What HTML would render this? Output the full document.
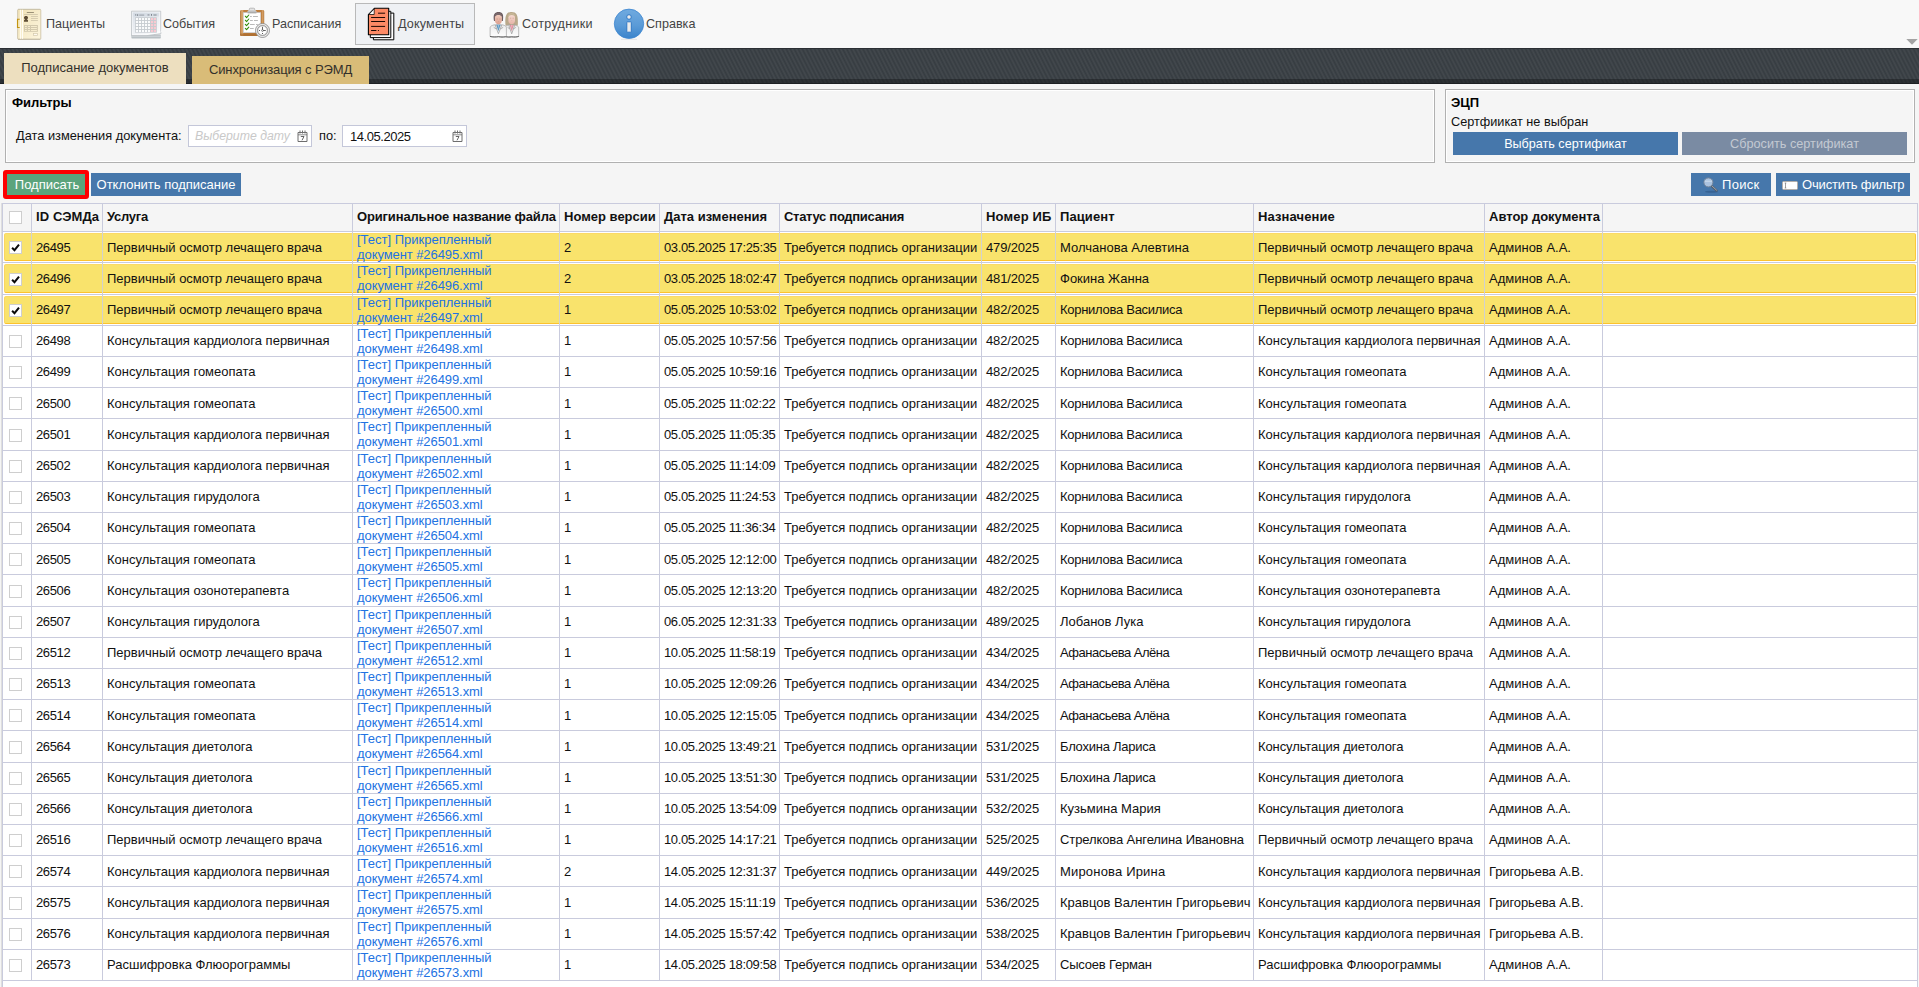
<!DOCTYPE html>
<html lang="ru"><head><meta charset="utf-8"><title>Подписание документов</title>
<style>
*{box-sizing:border-box}
html,body{margin:0;padding:0}
body{width:1919px;height:987px;overflow:hidden;position:relative;background:#f5f5f5;font-family:"Liberation Sans",sans-serif;font-size:13px;color:#111}
.abs{position:absolute}
.tb{position:absolute;left:0;top:0;width:1919px;height:48px;background:#f8f8f8}
.tbi{position:absolute;top:4px;width:40px;height:40px}
.tbt{position:absolute;top:15px;height:18px;line-height:18px;font-size:12.6px;color:#444;white-space:nowrap}
.tbact{position:absolute;left:355px;top:3px;width:120px;height:42px;background:#eff1f4;border:1px solid #b9b9b9}
.band{position:absolute;left:0;top:48px;width:1919px;height:36px;background:#363c41 repeating-linear-gradient(63deg,rgba(255,255,255,0) 0,rgba(255,255,255,.065) 1.8px,rgba(255,255,255,0) 3.6px);border-top:1px solid #2c3034}
.band:after{content:"";position:absolute;left:0;right:0;bottom:0;height:4px;background:rgba(20,22,25,.45);border-bottom:1px solid #1d2023}
.tab{position:absolute;text-align:center;font-size:13px;color:#33302b;white-space:nowrap}
.tab1{left:4px;top:53px;width:182px;height:31px;line-height:29px;background:#eddfbf}
.tab2{left:192px;top:56px;width:177px;height:28px;line-height:27px;background:#d9bc78;letter-spacing:-0.12px}
.panel{position:absolute;top:89px;height:74px;border:1px solid #b1b1b1;box-shadow:inset 0 0 0 1px #fff;background:#f5f5f5}
.ptitle{position:absolute;font-weight:bold;font-size:13px;line-height:16px;white-space:nowrap;color:#000}
.lbl{position:absolute;font-size:12.8px;line-height:16px;white-space:nowrap;color:#111}
.inp{position:absolute;top:125px;height:22px;width:124px;border:1px solid #c4c7d9;background:#fff;font-size:13px;line-height:20px;white-space:nowrap}
.inp span{position:absolute;left:7px;top:1px;letter-spacing:-0.45px}
.inp .ph{font-style:italic;color:#c9c9c9;left:6px;top:0;font-size:12.3px;letter-spacing:0}
.inp svg{position:absolute;right:3px;top:4px}
.btn{position:absolute;height:23px;line-height:24px;background:#4677ab;color:#fff;font-size:13px;text-align:center;white-space:nowrap}
.btn.g{background:#5ba47c}
.btn.d{background:#7a8ba3;color:#c3c9d2}
.redfr{position:absolute;left:3px;top:170px;width:86px;height:29px;border:4px solid #fe0000;border-radius:3px}
/* grid */
.grid{position:absolute;left:2px;top:203px;width:1916px;height:784px;background:#fff;overflow:hidden}
.grid .bl{position:absolute;background:#c9cbdd;z-index:3}
.hrow{position:absolute;left:0;top:0;width:1916px;height:29px;background:#f5f5f5;border-top:1px solid #c9cbdd;border-bottom:1px solid #c9cbdd}
.hc{position:absolute;top:0;height:27px;border-left:1px solid #c9cbdd;padding-left:4px;overflow:hidden;white-space:nowrap}
.ht{position:absolute;left:4px;top:5px;font-weight:bold;font-size:13px;line-height:16px;color:#111}
.row{position:absolute;left:0;width:1916px;border-bottom:1px solid #c9cbdd}
.row .c{position:absolute;top:0;bottom:0;border-left:1px solid #c9cbdd;overflow:hidden;white-space:nowrap}
.row .c span{position:absolute;left:4px;top:var(--t);line-height:16px;font-size:13px}
.row .c.n span{letter-spacing:-0.36px}
.row .c.n2 span{letter-spacing:-0.15px}
.row .c.lk a{position:absolute;left:4px;top:1px;font-size:13px;line-height:14.7px;color:#2272e2}
.row .c.lk a i{font-style:normal;letter-spacing:-0.08px}
.cb{position:absolute;width:13px;height:13px;border:1px solid #cecece;background:#fff;margin:0!important}
.cb svg{position:absolute;left:-1px;top:-1px}
.selbg{position:absolute;left:2px;right:2px;top:1px;bottom:1px;background:#f9e36c;border:1px solid;border-color:#fbd966 #fcc83a #fcc22e #fbd560;border-radius:2px}
.sel .c{border-left-color:#d2d1cf}

</style></head>
<body>
<div class="tb">
<div class="tbact"></div>
<!-- icons inserted -->
<svg class="tbi" style="left:10px" viewBox="0 0 40 40">
<defs><linearGradient id="pg" x1="0" y1="0" x2="1" y2="1"><stop offset="0" stop-color="#f1e2b6"/><stop offset="1" stop-color="#fdf6df"/></linearGradient></defs>
<rect x="7.6" y="5.4" width="23.2" height="29.8" rx="0.8" fill="url(#pg)" stroke="#c4b99b" stroke-width="0.7"/><path d="M8 35.3h22.4" stroke="#aca590" stroke-width="0.6"/><path d="M8 5.3h22.4" stroke="#bdb49c" stroke-width="0.5"/>
<rect x="9.9" y="5.8" width="1" height="29" fill="#fffdf6"/><rect x="11.9" y="5.8" width="1.1" height="29" fill="#fffdf6"/>
<path d="M9.7 15.3H7.5v8.2h2.2" fill="none" stroke="#c39412" stroke-width="1.1"/><path d="M8.5 16.2v6.4" stroke="#f3e3a8" stroke-width="0.9"/>
<rect x="16.8" y="8.1" width="7.1" height="0.8" fill="#857a63"/>
<rect x="14" y="10.1" width="13.9" height="0.8" fill="#cfc5a9"/>
<rect x="21" y="12.1" width="6.9" height="0.8" fill="#cfc5a9"/><rect x="21" y="14.1" width="6.9" height="0.8" fill="#cfc5a9"/><rect x="21" y="16.1" width="6.9" height="0.8" fill="#cfc5a9"/>
<path d="M14 17.8v-1.6l1-.7c-.8-.6-1-1.3-1-2 0-1 .8-1.6 2-1.6s2 .6 2 1.6c0 .7-.2 1.4-1 2l1 .7v1.6z" fill="#5d4d36"/>
<rect x="14" y="21" width="13.9" height="6.8" fill="#d3c9ad"/>
<g fill="#fbf1d2"><rect x="15" y="22" width="1.8" height="0.9"/><rect x="18" y="22" width="2" height="0.9"/><rect x="21" y="22" width="5.9" height="0.9"/>
<rect x="15" y="24" width="1.8" height="0.9"/><rect x="18" y="24" width="2" height="0.9"/><rect x="21" y="24" width="5.9" height="0.9"/>
<rect x="15" y="26" width="1.8" height="0.9"/><rect x="18" y="26" width="2" height="0.9"/><rect x="21" y="26" width="5.9" height="0.9"/></g>
<rect x="23.4" y="29.4" width="4.2" height="2.2" fill="#fffaf0" stroke="#d3c9ad" stroke-width="0.7"/>
</svg>
<svg class="tbi" style="left:126px" viewBox="0 0 40 40">
<defs><linearGradient id="cg" x1="0" y1="0" x2="1" y2="1"><stop offset="0" stop-color="#f4f6f8"/><stop offset="1" stop-color="#fdfdfe"/></linearGradient><linearGradient id="cg2" x1="0" y1="0" x2="0.6" y2="1"><stop offset="0" stop-color="#d9dfe7"/><stop offset="1" stop-color="#f7f8fa"/></linearGradient></defs>
<rect x="5.4" y="30.4" width="29.4" height="4" rx="0.6" fill="#b9c0c4"/><rect x="5.4" y="31.8" width="29.4" height="0.8" fill="#d9dde0"/>
<path d="M5.5 7.2h29.2v20.5l.3 1.9-14 2H5.5z" fill="url(#cg)" stroke="#b5babf" stroke-width="0.7"/><path d="M6.6 8.3h27v18.8l-13 3.2h-14z" fill="url(#cg2)"/><rect x="7.4" y="9.2" width="25.4" height="3.2" fill="#d3dae2" opacity=".8"/>
<g fill="#7f878f"><rect x="9.4" y="10" width="0.8" height="1.8"/><rect x="11" y="10.3" width="1.2" height="1.5"/><rect x="13.2" y="10.5" width="5" height="1.2" opacity=".6"/><rect x="21.5" y="10" width="2" height="1.8" opacity=".55"/><rect x="25" y="10" width="1" height="1.8"/><rect x="27.4" y="10.2" width="3.2" height="1.6" opacity=".6"/></g>
<rect x="9.1" y="13.2" width="21.7" height="15.5" fill="#c6cbd0"/>
<g fill="#fafbfc">
<rect x="9.9" y="14" width="2.1" height="2.1"/><rect x="12.9" y="14" width="2.1" height="2.1"/><rect x="15.9" y="14" width="2.1" height="2.1"/><rect x="18.9" y="14" width="2.1" height="2.1"/><rect x="21.9" y="14" width="2.1" height="2.1"/>
<rect x="9.9" y="17" width="2.1" height="2.1"/><rect x="12.9" y="17" width="2.1" height="2.1"/><rect x="15.9" y="17" width="2.1" height="2.1"/><rect x="18.9" y="17" width="2.1" height="2.1"/><rect x="21.9" y="17" width="2.1" height="2.1"/>
<rect x="9.9" y="20" width="2.1" height="2.1"/><rect x="12.9" y="20" width="2.1" height="2.1"/><rect x="15.9" y="20" width="2.1" height="2.1"/><rect x="18.9" y="20" width="2.1" height="2.1"/><rect x="21.9" y="20" width="2.1" height="2.1"/>
<rect x="9.9" y="23" width="2.1" height="2.1"/><rect x="12.9" y="23" width="2.1" height="2.1"/><rect x="15.9" y="23" width="2.1" height="2.1"/><rect x="18.9" y="23" width="2.1" height="2.1"/><rect x="21.9" y="23" width="2.1" height="2.1"/>
<rect x="9.9" y="26" width="2.1" height="2.1"/><rect x="12.9" y="26" width="2.1" height="2.1"/><rect x="15.9" y="26" width="2.1" height="2.1"/><rect x="18.9" y="26" width="2.1" height="2.1"/><rect x="21.9" y="26" width="2.1" height="2.1"/>
</g>
<g fill="#f9c9d1">
<rect x="24.9" y="14" width="2.1" height="2.1"/><rect x="27.9" y="14" width="2.1" height="2.1"/>
<rect x="24.9" y="17" width="2.1" height="2.1"/><rect x="27.9" y="17" width="2.1" height="2.1"/>
<rect x="24.9" y="20" width="2.1" height="2.1"/><rect x="27.9" y="20" width="2.1" height="2.1"/>
<rect x="24.9" y="23" width="2.1" height="2.1"/><rect x="27.9" y="23" width="2.1" height="2.1"/>
<rect x="24.9" y="26" width="2.1" height="2.1"/><rect x="27.9" y="26" width="2.1" height="2.1"/>
</g>
<path d="M35 22.5c.2 3 .6 5 .8 5.3-3 1.5-9 2.6-15.5 3.2 7-.4 12-1.7 14.7-3.4z" fill="#fff" opacity=".9"/>
</svg>
<svg class="tbi" style="left:234px" viewBox="0 0 40 40">
<defs><linearGradient id="bg1" x1="0" y1="0" x2="1" y2="0"><stop offset="0" stop-color="#a96a2c"/><stop offset=".08" stop-color="#e0b07a"/><stop offset=".16" stop-color="#bd7f40"/><stop offset=".88" stop-color="#bd7f40"/><stop offset=".95" stop-color="#dca86e"/><stop offset="1" stop-color="#a3662a"/></linearGradient>
<linearGradient id="sg" x1="0" y1="0" x2="0" y2="1"><stop offset="0" stop-color="#d6d6d6"/><stop offset=".7" stop-color="#b5b5b5"/><stop offset="1" stop-color="#7d7d7d"/></linearGradient>
<radialGradient id="clk" cx=".5" cy=".5" r=".5"><stop offset="0" stop-color="#fff"/><stop offset=".66" stop-color="#fafafa"/><stop offset=".72" stop-color="#9a9a9a"/><stop offset=".8" stop-color="#e6e6e6"/><stop offset=".93" stop-color="#d2d2d2"/><stop offset="1" stop-color="#8d8d8d"/></radialGradient></defs>
<rect x="6.1" y="6.1" width="24.1" height="25.9" rx="1.3" fill="url(#bg1)"/>
<rect x="6.1" y="29.5" width="24.1" height="2.5" rx="1" fill="#a96a2c" opacity=".7"/>
<rect x="9.3" y="8.7" width="17.4" height="20" fill="#fff" stroke="#c5cedb" stroke-width="0.6"/>
<path d="M15.3 6.2v-1q0-1 1-1h3.4q1 0 1 1v1" fill="#e4e4e4" stroke="#a3a3a3" stroke-width="0.7"/>
<path d="M14.6 6.1h6.8l1 1.1v2.1h-8.8v-2.1z" fill="url(#sg)"/>
<g fill="none" stroke="#2f8c0a" stroke-width="1.05" stroke-linecap="round" stroke-linejoin="round"><path d="M11.3 12.2l1.3 1.4 2.2-2.6"/><path d="M11.3 16.2l1.3 1.4 2.2-2.6"/><path d="M11.3 20.3l1.3 1.4 2.2-2.6"/><path d="M11.3 24.3l1.3 1.4 2.2-2.6"/></g>
<g fill="#a9a9a9"><rect x="16" y="12.1" width="1.8" height="0.8"/><rect x="19" y="12.1" width="4.9" height="0.8"/><rect x="16" y="16.1" width="2.8" height="0.8"/><rect x="20" y="16.1" width="3.9" height="0.8"/><rect x="16" y="20.2" width="4.7" height="0.8"/><rect x="22" y="20.2" width="1.8" height="0.8"/><rect x="16" y="24.2" width="3.7" height="0.8"/></g>
<circle cx="28.5" cy="26.5" r="7" fill="#cecece" stroke="#8a8a8a" stroke-width="0.8"/><circle cx="28.5" cy="26.5" r="6" fill="none" stroke="#efefef" stroke-width="0.9"/><circle cx="28.5" cy="26.5" r="4.9" fill="#fdfdfd" stroke="#888" stroke-width="0.9"/>
<path d="M28.5 22.8v3.7h3.3" fill="none" stroke="#222" stroke-width="0.7"/><circle cx="28.5" cy="26.5" r="0.9" fill="#fff" stroke="#222" stroke-width="0.5"/><circle cx="25.4" cy="26.5" r="0.5" fill="#222"/><circle cx="28.5" cy="29.5" r="0.5" fill="#222"/>
</svg>
<svg class="tbi" style="left:360px" viewBox="0 0 40 40">
<path d="M30.8 9.1h3v26.7H13.4v-2.2" fill="#fff" stroke="#000" stroke-width="1"/>
<path d="M28.9 7.3h1.9v26.3H10.3V31" fill="#fff" stroke="#000" stroke-width="1"/>
<path d="M14.4 4.3h14.3v26.5H8.4V10.7z" fill="#fd8a65" stroke="#000" stroke-width="1.1" stroke-linejoin="round"/>
<path d="M8.8 10.5h5.4V4.8z" fill="#fff" stroke="#111" stroke-width="0.8" stroke-linejoin="round"/>
<g stroke="#1c0803" stroke-width="1" stroke-linecap="round"><path d="M18.4 9.2h6.3"/><path d="M11.5 13.5h13.2"/><path d="M11.5 17.5h13.2"/><path d="M11.5 22.4h13.2"/><path d="M11.5 26.5h4.5"/><path d="M18.3 26.5h.2"/></g>
<path d="M30.5 10.2v.4M30.5 11.5v.2" stroke="#fff" stroke-width="0.5"/>
</svg>
<svg class="tbi" style="left:484px" viewBox="0 0 40 40">
<defs><linearGradient id="coat" x1="0" y1="0" x2="0" y2="1"><stop offset="0" stop-color="#ececec"/><stop offset="1" stop-color="#fdfdfd"/></linearGradient>
<linearGradient id="fm" x1="0" y1="0" x2="0" y2="1"><stop offset="0" stop-color="#f1cbbd"/><stop offset="1" stop-color="#dd9f8e"/></linearGradient>
<linearGradient id="fw" x1="0" y1="0" x2="0" y2="1"><stop offset="0" stop-color="#f5dad0"/><stop offset="1" stop-color="#e6b3a6"/></linearGradient></defs>
<path d="M21.5 21.6c-.3-4.2-.5-8.200.9-10.9 1.2-2.2 3.2-2.8 5.3-2.8s4.100.7 5.1 2.9c1.3 2.8 1.1 6.8 1 10.8z" fill="#b9a88a"/>
<path d="M24.4 13.3c0-1.7 1.4-2.4 3.3-2.4s3.300.7 3.3 2.4v3.3c0 2.3-1.5 3.8-3.3 3.8s-3.3-1.5-3.3-3.8z" fill="url(#fw)"/>
<path d="M23.8 13.5c.8-2 2.2-2.9 3.9-2.9 1.8 0 3.200.9 4 2.9-.3-3-1.7-4.6-4-4.6-2.2 0-3.7 1.6-3.9 4.6z" fill="#c9b999"/>
<path d="M21 32.6v-9c0-1.3 1.5-2 3.6-2.6h6.3c2 .6 3.8 1.3 3.8 2.6v9z" fill="url(#coat)" stroke="#a2a2a2" stroke-width="0.7"/>
<path d="M25.7 21l2 6.4 2.1-6.4z" fill="#dc8e9c"/><path d="M27 21l.7 4 .8-4z" fill="#f0b4bf"/>
<path d="M24.8 21.2l2.9 8.6 3-8.6M23.6 23.4l2.3 1.5M31.8 23.4l-2.2 1.5" stroke="#959595" stroke-width="0.7" fill="none"/>
<path d="M10 17c-.5-3.1-.6-5.700.4-7.1 1-1.5 2.5-2 4.1-2 1.8 0 3.300.5 4.1 2 .8 1.600.6 4 .3 7.1z" fill="#6c5c60"/>
<path d="M10.9 12.8c0-1.3 1.5-2 3.5-2s3.500.7 3.5 2v3.8c0 2.3-1.6 3.9-3.5 3.9s-3.5-1.6-3.5-3.9z" fill="url(#fm)"/>
<path d="M10.6 13.2c1.3-1.9 2.5-2.1 3.9-2.1 1.5 0 2.700.4 3.8 2.1 0-3-1.4-4.5-3.8-4.5s-3.9 1.5-3.9 4.5z" fill="#7a696c"/>
<path d="M12.6 15h1.3M15.3 15h1.3M14.3 17.2l.3.5M26 14.2h1.2M28.6 14.2h1.2M27.7 16.5l.2.4" stroke="#9a6a5c" stroke-width="0.5" opacity=".7" fill="none"/><path d="M6.1 32.6v-9c0-1.3 1.7-2.1 4.2-2.8h8.3c2.400.7 3.8 1.5 3.8 2.8v9z" fill="url(#coat)" stroke="#a2a2a2" stroke-width="0.7"/>
<path d="M12.2 20.8l2.2 6.4 2.3-6.4z" fill="#5f97bf"/><path d="M13.7 20.8l.7 4 .8-4z" fill="#9cc4de"/>
<path d="M11.2 21l3.2 8.7 3.4-8.7M9.7 23.3l2.5 1.6M19.2 23.3l-2.6 1.6" stroke="#959595" stroke-width="0.7" fill="none"/>
<path d="M6 32.4c2.500.8 6 .8 8.500.3 2.300.5 4.700.6 7 .1 2.200.5 4.300.5 6.300.1 2.300.4 4.700.3 7-.5" stroke="#5f5f5f" stroke-width="1" fill="none"/>
</svg>
<svg class="tbi" style="left:608px" viewBox="0 0 40 40">
<defs><linearGradient id="ig" x1="0" y1="0" x2="0" y2="1"><stop offset="0" stop-color="#70aadf"/><stop offset=".55" stop-color="#5b9bd7"/><stop offset="1" stop-color="#3a83cb"/></linearGradient></defs>
<path d="M13 35.4h16" stroke="#d8d8d8" stroke-width="0.6"/>
<circle cx="21" cy="19.8" r="14.7" fill="url(#ig)" stroke="#3d86d1" stroke-width="0.8"/>
<circle cx="21" cy="13" r="2.3" fill="#ededed" stroke="#2f78c6" stroke-width="1"/>
<rect x="18.8" y="17.8" width="4.5" height="10.4" rx="0.4" fill="#ececec" stroke="#2f78c6" stroke-width="1"/>
</svg>

<span class="tbt" style="left:46px">Пациенты</span>
<span class="tbt" style="left:163px">События</span>
<span class="tbt" style="left:272px">Расписания</span>
<span class="tbt" style="left:398px;letter-spacing:.15px">Документы</span>
<span class="tbt" style="left:522px;letter-spacing:.25px">Сотрудники</span>
<span class="tbt" style="left:646px">Справка</span>
<svg class="abs" style="left:1906px;top:39px" width="12" height="6" viewBox="0 0 12 6"><path d="M0.3 0h11.4L6 5.8z" fill="#a3a3a3"/></svg>
</div>
<div class="band"></div>
<div class="tab tab1">Подписание документов</div>
<div class="tab tab2">Синхронизация с РЭМД</div>

<div class="panel" style="left:5px;width:1430px"></div>
<div class="ptitle" style="left:12px;top:95px">Фильтры</div>
<div class="lbl" style="left:16px;top:128px">Дата изменения документа:</div>
<div class="inp" style="left:188px"><span class="ph">Выберите дату</span><svg width="11" height="12" viewBox="0 0 11 12"><path d="M1 2.500h9v9H1z" fill="#fff" stroke="#6e6e6e" stroke-width="1"/><path d="M1 4.800h9" stroke="#6e6e6e" stroke-width="0.800"/><path d="M3 0.500v3M5.500 0.500v3M8 0.500v3" stroke="#6e6e6e" stroke-width="1"/><path d="M3.800 6.500h3.200l-2 3.800" fill="none" stroke="#555" stroke-width="0.900"/></svg></div>
<div class="lbl" style="left:319px;top:128px">по:</div>
<div class="inp" style="left:342px;width:125px"><span>14.05.2025</span><svg width="11" height="12" viewBox="0 0 11 12"><path d="M1 2.500h9v9H1z" fill="#fff" stroke="#6e6e6e" stroke-width="1"/><path d="M1 4.800h9" stroke="#6e6e6e" stroke-width="0.800"/><path d="M3 0.500v3M5.500 0.500v3M8 0.500v3" stroke="#6e6e6e" stroke-width="1"/><path d="M3.800 6.500h3.200l-2 3.800" fill="none" stroke="#555" stroke-width="0.900"/></svg></div>

<div class="panel" style="left:1445px;width:470px"></div>
<div class="ptitle" style="left:1451px;top:95px">ЭЦП</div>
<div class="lbl" style="left:1451px;top:114px;font-size:12.7px">Сертфиикат не выбран</div>
<div class="btn" style="left:1453px;top:132px;width:225px;font-size:12.6px">Выбрать сертификат</div>
<div class="btn d" style="left:1682px;top:132px;width:225px;font-size:12.7px">Сбросить сертификат</div>

<div class="btn g" style="left:6px;top:173px;width:80px;padding-left:2px">Подписать</div>
<div class="redfr"></div>
<div class="btn" style="left:91px;top:173px;width:150px">Отклонить подписание</div>
<div class="btn" style="left:1691px;top:173px;width:80px;text-align:left"><span class="abs" style="left:31px;letter-spacing:.3px">Поиск</span><svg class="abs" style="left:11px;top:3px" width="18" height="18" viewBox="0 0 18 18"><ellipse cx="9.5" cy="15.7" rx="6.5" ry="1" fill="#2c5482" opacity=".55"/><path d="M10 10.4l4.6 4.2" stroke="#56606c" stroke-width="2.2" stroke-linecap="round"/><path d="M10.2 10.2l4.3 3.9" stroke="#b9c0ca" stroke-width="0.7" stroke-linecap="round"/><circle cx="6.4" cy="6.4" r="4.5" fill="#aac2df" stroke="#76869b" stroke-width="1"/><path d="M2.6 5.2h7.6" stroke="#d3e1f0" stroke-width="0.9"/></svg></div>
<div class="btn" style="left:1776px;top:173px;width:134px;text-align:left"><span class="abs" style="left:26px;letter-spacing:-0.15px">Очистить фильтр</span><svg class="abs" style="left:6px;top:8px" width="17" height="10" viewBox="0 0 17 10"><rect x="0.500" y="0.500" width="15" height="8" rx="1" fill="#fff" stroke="#b8aca0" stroke-width="0.800"/><path d="M3.500 2v5M2.700 2h1.600M2.700 7h1.600" stroke="#777" stroke-width="0.700"/></svg></div>
<div class="abs" style="left:1px;top:203px;width:1px;height:784px;background:#dedede"></div>
<div class="grid">
<div class="bl" style="left:0;top:0;width:1px;height:784px"></div><div class="bl" style="left:1915px;top:0;width:1px;height:784px"></div>
<div class="hrow"><div class="hc" style="left:0px;width:29px"><span class="cb" style="left:6px;top:7px"></span></div><div class="hc" style="left:29px;width:71px"><span class="ht" style="letter-spacing:0.1px">ID СЭМДа</span></div><div class="hc" style="left:100px;width:250px"><span class="ht" style="letter-spacing:-0.25px">Услуга</span></div><div class="hc" style="left:350px;width:207px"><span class="ht" style="letter-spacing:-0.15px">Оригинальное название файла</span></div><div class="hc" style="left:557px;width:100px"><span class="ht">Номер версии</span></div><div class="hc" style="left:657px;width:120px"><span class="ht">Дата изменения</span></div><div class="hc" style="left:777px;width:202px"><span class="ht" style="letter-spacing:-0.3px">Статус подписания</span></div><div class="hc" style="left:979px;width:74px"><span class="ht" style="letter-spacing:0.17px">Номер ИБ</span></div><div class="hc" style="left:1053px;width:198px"><span class="ht" style="letter-spacing:0.1px">Пациент</span></div><div class="hc" style="left:1251px;width:231px"><span class="ht" style="letter-spacing:0.1px">Назначение</span></div><div class="hc" style="left:1482px;width:118px"><span class="ht">Автор документа</span></div><div class="hc" style="left:1600px;width:315px"><span class="ht"></span></div></div>
<div class="row sel" style="top:29px;height:31px;--t:8px"><div class="selbg"></div><div class="c" style="left:0px;width:29px"><span class="cb" style="left:6px;top:9px"><svg viewBox="0 0 13 13" width="13" height="13"><path d="M3.1 6.7L5.5 9.2L10 3.7" fill="none" stroke="#0a0a0a" stroke-width="2"/></svg></span></div><div class="c n" style="left:29px;width:71px"><span>26495</span></div><div class="c" style="left:100px;width:250px"><span>Первичный осмотр лечащего врача</span></div><div class="c lk" style="left:350px;width:207px"><a>[Тест] Прикрепленный<br><i>документ #26495.xml</i></a></div><div class="c n" style="left:557px;width:100px"><span>2</span></div><div class="c n" style="left:657px;width:120px"><span>03.05.2025 17:25:35</span></div><div class="c" style="left:777px;width:202px"><span>Требуется подпись организации</span></div><div class="c n2" style="left:979px;width:74px"><span>479/2025</span></div><div class="c" style="left:1053px;width:198px"><span>Молчанова Алевтина</span></div><div class="c" style="left:1251px;width:231px"><span>Первичный осмотр лечащего врача</span></div><div class="c" style="left:1482px;width:118px"><span>Админов А.А.</span></div><div class="c" style="left:1600px;width:315px"><span></span></div></div>
<div class="row sel" style="top:60px;height:32px;--t:8px"><div class="selbg"></div><div class="c" style="left:0px;width:29px"><span class="cb" style="left:6px;top:10px"><svg viewBox="0 0 13 13" width="13" height="13"><path d="M3.1 6.7L5.5 9.2L10 3.7" fill="none" stroke="#0a0a0a" stroke-width="2"/></svg></span></div><div class="c n" style="left:29px;width:71px"><span>26496</span></div><div class="c" style="left:100px;width:250px"><span>Первичный осмотр лечащего врача</span></div><div class="c lk" style="left:350px;width:207px"><a>[Тест] Прикрепленный<br><i>документ #26496.xml</i></a></div><div class="c n" style="left:557px;width:100px"><span>2</span></div><div class="c n" style="left:657px;width:120px"><span>03.05.2025 18:02:47</span></div><div class="c" style="left:777px;width:202px"><span>Требуется подпись организации</span></div><div class="c n2" style="left:979px;width:74px"><span>481/2025</span></div><div class="c" style="left:1053px;width:198px"><span>Фокина Жанна</span></div><div class="c" style="left:1251px;width:231px"><span>Первичный осмотр лечащего врача</span></div><div class="c" style="left:1482px;width:118px"><span>Админов А.А.</span></div><div class="c" style="left:1600px;width:315px"><span></span></div></div>
<div class="row sel" style="top:92px;height:31px;--t:7px"><div class="selbg"></div><div class="c" style="left:0px;width:29px"><span class="cb" style="left:6px;top:9px"><svg viewBox="0 0 13 13" width="13" height="13"><path d="M3.1 6.7L5.5 9.2L10 3.7" fill="none" stroke="#0a0a0a" stroke-width="2"/></svg></span></div><div class="c n" style="left:29px;width:71px"><span>26497</span></div><div class="c" style="left:100px;width:250px"><span>Первичный осмотр лечащего врача</span></div><div class="c lk" style="left:350px;width:207px"><a>[Тест] Прикрепленный<br><i>документ #26497.xml</i></a></div><div class="c n" style="left:557px;width:100px"><span>1</span></div><div class="c n" style="left:657px;width:120px"><span>05.05.2025 10:53:02</span></div><div class="c" style="left:777px;width:202px"><span>Требуется подпись организации</span></div><div class="c n2" style="left:979px;width:74px"><span>482/2025</span></div><div class="c" style="left:1053px;width:198px"><span style="letter-spacing:-0.28px">Корнилова Василиса</span></div><div class="c" style="left:1251px;width:231px"><span>Первичный осмотр лечащего врача</span></div><div class="c" style="left:1482px;width:118px"><span>Админов А.А.</span></div><div class="c" style="left:1600px;width:315px"><span></span></div></div>
<div class="row" style="top:123px;height:31px;--t:7px"><div class="c" style="left:0px;width:29px"><span class="cb" style="left:6px;top:9px"></span></div><div class="c n" style="left:29px;width:71px"><span>26498</span></div><div class="c" style="left:100px;width:250px"><span>Консультация кардиолога первичная</span></div><div class="c lk" style="left:350px;width:207px"><a>[Тест] Прикрепленный<br><i>документ #26498.xml</i></a></div><div class="c n" style="left:557px;width:100px"><span>1</span></div><div class="c n" style="left:657px;width:120px"><span>05.05.2025 10:57:56</span></div><div class="c" style="left:777px;width:202px"><span>Требуется подпись организации</span></div><div class="c n2" style="left:979px;width:74px"><span>482/2025</span></div><div class="c" style="left:1053px;width:198px"><span style="letter-spacing:-0.28px">Корнилова Василиса</span></div><div class="c" style="left:1251px;width:231px"><span>Консультация кардиолога первичная</span></div><div class="c" style="left:1482px;width:118px"><span>Админов А.А.</span></div><div class="c" style="left:1600px;width:315px"><span></span></div></div>
<div class="row" style="top:154px;height:31px;--t:7px"><div class="c" style="left:0px;width:29px"><span class="cb" style="left:6px;top:9px"></span></div><div class="c n" style="left:29px;width:71px"><span>26499</span></div><div class="c" style="left:100px;width:250px"><span>Консультация гомеопата</span></div><div class="c lk" style="left:350px;width:207px"><a>[Тест] Прикрепленный<br><i>документ #26499.xml</i></a></div><div class="c n" style="left:557px;width:100px"><span>1</span></div><div class="c n" style="left:657px;width:120px"><span>05.05.2025 10:59:16</span></div><div class="c" style="left:777px;width:202px"><span>Требуется подпись организации</span></div><div class="c n2" style="left:979px;width:74px"><span>482/2025</span></div><div class="c" style="left:1053px;width:198px"><span style="letter-spacing:-0.28px">Корнилова Василиса</span></div><div class="c" style="left:1251px;width:231px"><span>Консультация гомеопата</span></div><div class="c" style="left:1482px;width:118px"><span>Админов А.А.</span></div><div class="c" style="left:1600px;width:315px"><span></span></div></div>
<div class="row" style="top:185px;height:31px;--t:8px"><div class="c" style="left:0px;width:29px"><span class="cb" style="left:6px;top:9px"></span></div><div class="c n" style="left:29px;width:71px"><span>26500</span></div><div class="c" style="left:100px;width:250px"><span>Консультация гомеопата</span></div><div class="c lk" style="left:350px;width:207px"><a>[Тест] Прикрепленный<br><i>документ #26500.xml</i></a></div><div class="c n" style="left:557px;width:100px"><span>1</span></div><div class="c n" style="left:657px;width:120px"><span>05.05.2025 11:02:22</span></div><div class="c" style="left:777px;width:202px"><span>Требуется подпись организации</span></div><div class="c n2" style="left:979px;width:74px"><span>482/2025</span></div><div class="c" style="left:1053px;width:198px"><span style="letter-spacing:-0.28px">Корнилова Василиса</span></div><div class="c" style="left:1251px;width:231px"><span>Консультация гомеопата</span></div><div class="c" style="left:1482px;width:118px"><span>Админов А.А.</span></div><div class="c" style="left:1600px;width:315px"><span></span></div></div>
<div class="row" style="top:216px;height:32px;--t:8px"><div class="c" style="left:0px;width:29px"><span class="cb" style="left:6px;top:10px"></span></div><div class="c n" style="left:29px;width:71px"><span>26501</span></div><div class="c" style="left:100px;width:250px"><span>Консультация кардиолога первичная</span></div><div class="c lk" style="left:350px;width:207px"><a>[Тест] Прикрепленный<br><i>документ #26501.xml</i></a></div><div class="c n" style="left:557px;width:100px"><span>1</span></div><div class="c n" style="left:657px;width:120px"><span>05.05.2025 11:05:35</span></div><div class="c" style="left:777px;width:202px"><span>Требуется подпись организации</span></div><div class="c n2" style="left:979px;width:74px"><span>482/2025</span></div><div class="c" style="left:1053px;width:198px"><span style="letter-spacing:-0.28px">Корнилова Василиса</span></div><div class="c" style="left:1251px;width:231px"><span>Консультация кардиолога первичная</span></div><div class="c" style="left:1482px;width:118px"><span>Админов А.А.</span></div><div class="c" style="left:1600px;width:315px"><span></span></div></div>
<div class="row" style="top:248px;height:31px;--t:7px"><div class="c" style="left:0px;width:29px"><span class="cb" style="left:6px;top:9px"></span></div><div class="c n" style="left:29px;width:71px"><span>26502</span></div><div class="c" style="left:100px;width:250px"><span>Консультация кардиолога первичная</span></div><div class="c lk" style="left:350px;width:207px"><a>[Тест] Прикрепленный<br><i>документ #26502.xml</i></a></div><div class="c n" style="left:557px;width:100px"><span>1</span></div><div class="c n" style="left:657px;width:120px"><span>05.05.2025 11:14:09</span></div><div class="c" style="left:777px;width:202px"><span>Требуется подпись организации</span></div><div class="c n2" style="left:979px;width:74px"><span>482/2025</span></div><div class="c" style="left:1053px;width:198px"><span style="letter-spacing:-0.28px">Корнилова Василиса</span></div><div class="c" style="left:1251px;width:231px"><span>Консультация кардиолога первичная</span></div><div class="c" style="left:1482px;width:118px"><span>Админов А.А.</span></div><div class="c" style="left:1600px;width:315px"><span></span></div></div>
<div class="row" style="top:279px;height:31px;--t:7px"><div class="c" style="left:0px;width:29px"><span class="cb" style="left:6px;top:9px"></span></div><div class="c n" style="left:29px;width:71px"><span>26503</span></div><div class="c" style="left:100px;width:250px"><span>Консультация гирудолога</span></div><div class="c lk" style="left:350px;width:207px"><a>[Тест] Прикрепленный<br><i>документ #26503.xml</i></a></div><div class="c n" style="left:557px;width:100px"><span>1</span></div><div class="c n" style="left:657px;width:120px"><span>05.05.2025 11:24:53</span></div><div class="c" style="left:777px;width:202px"><span>Требуется подпись организации</span></div><div class="c n2" style="left:979px;width:74px"><span>482/2025</span></div><div class="c" style="left:1053px;width:198px"><span style="letter-spacing:-0.28px">Корнилова Василиса</span></div><div class="c" style="left:1251px;width:231px"><span>Консультация гирудолога</span></div><div class="c" style="left:1482px;width:118px"><span>Админов А.А.</span></div><div class="c" style="left:1600px;width:315px"><span></span></div></div>
<div class="row" style="top:310px;height:31px;--t:7px"><div class="c" style="left:0px;width:29px"><span class="cb" style="left:6px;top:9px"></span></div><div class="c n" style="left:29px;width:71px"><span>26504</span></div><div class="c" style="left:100px;width:250px"><span>Консультация гомеопата</span></div><div class="c lk" style="left:350px;width:207px"><a>[Тест] Прикрепленный<br><i>документ #26504.xml</i></a></div><div class="c n" style="left:557px;width:100px"><span>1</span></div><div class="c n" style="left:657px;width:120px"><span>05.05.2025 11:36:34</span></div><div class="c" style="left:777px;width:202px"><span>Требуется подпись организации</span></div><div class="c n2" style="left:979px;width:74px"><span>482/2025</span></div><div class="c" style="left:1053px;width:198px"><span style="letter-spacing:-0.28px">Корнилова Василиса</span></div><div class="c" style="left:1251px;width:231px"><span>Консультация гомеопата</span></div><div class="c" style="left:1482px;width:118px"><span>Админов А.А.</span></div><div class="c" style="left:1600px;width:315px"><span></span></div></div>
<div class="row" style="top:341px;height:31px;--t:8px"><div class="c" style="left:0px;width:29px"><span class="cb" style="left:6px;top:9px"></span></div><div class="c n" style="left:29px;width:71px"><span>26505</span></div><div class="c" style="left:100px;width:250px"><span>Консультация гомеопата</span></div><div class="c lk" style="left:350px;width:207px"><a>[Тест] Прикрепленный<br><i>документ #26505.xml</i></a></div><div class="c n" style="left:557px;width:100px"><span>1</span></div><div class="c n" style="left:657px;width:120px"><span>05.05.2025 12:12:00</span></div><div class="c" style="left:777px;width:202px"><span>Требуется подпись организации</span></div><div class="c n2" style="left:979px;width:74px"><span>482/2025</span></div><div class="c" style="left:1053px;width:198px"><span style="letter-spacing:-0.28px">Корнилова Василиса</span></div><div class="c" style="left:1251px;width:231px"><span>Консультация гомеопата</span></div><div class="c" style="left:1482px;width:118px"><span>Админов А.А.</span></div><div class="c" style="left:1600px;width:315px"><span></span></div></div>
<div class="row" style="top:372px;height:32px;--t:8px"><div class="c" style="left:0px;width:29px"><span class="cb" style="left:6px;top:10px"></span></div><div class="c n" style="left:29px;width:71px"><span>26506</span></div><div class="c" style="left:100px;width:250px"><span>Консультация озонотерапевта</span></div><div class="c lk" style="left:350px;width:207px"><a>[Тест] Прикрепленный<br><i>документ #26506.xml</i></a></div><div class="c n" style="left:557px;width:100px"><span>1</span></div><div class="c n" style="left:657px;width:120px"><span>05.05.2025 12:13:20</span></div><div class="c" style="left:777px;width:202px"><span>Требуется подпись организации</span></div><div class="c n2" style="left:979px;width:74px"><span>482/2025</span></div><div class="c" style="left:1053px;width:198px"><span style="letter-spacing:-0.28px">Корнилова Василиса</span></div><div class="c" style="left:1251px;width:231px"><span>Консультация озонотерапевта</span></div><div class="c" style="left:1482px;width:118px"><span>Админов А.А.</span></div><div class="c" style="left:1600px;width:315px"><span></span></div></div>
<div class="row" style="top:404px;height:31px;--t:7px"><div class="c" style="left:0px;width:29px"><span class="cb" style="left:6px;top:9px"></span></div><div class="c n" style="left:29px;width:71px"><span>26507</span></div><div class="c" style="left:100px;width:250px"><span>Консультация гирудолога</span></div><div class="c lk" style="left:350px;width:207px"><a>[Тест] Прикрепленный<br><i>документ #26507.xml</i></a></div><div class="c n" style="left:557px;width:100px"><span>1</span></div><div class="c n" style="left:657px;width:120px"><span>06.05.2025 12:31:33</span></div><div class="c" style="left:777px;width:202px"><span>Требуется подпись организации</span></div><div class="c n2" style="left:979px;width:74px"><span>489/2025</span></div><div class="c" style="left:1053px;width:198px"><span>Лобанов Лука</span></div><div class="c" style="left:1251px;width:231px"><span>Консультация гирудолога</span></div><div class="c" style="left:1482px;width:118px"><span>Админов А.А.</span></div><div class="c" style="left:1600px;width:315px"><span></span></div></div>
<div class="row" style="top:435px;height:31px;--t:7px"><div class="c" style="left:0px;width:29px"><span class="cb" style="left:6px;top:9px"></span></div><div class="c n" style="left:29px;width:71px"><span>26512</span></div><div class="c" style="left:100px;width:250px"><span>Первичный осмотр лечащего врача</span></div><div class="c lk" style="left:350px;width:207px"><a>[Тест] Прикрепленный<br><i>документ #26512.xml</i></a></div><div class="c n" style="left:557px;width:100px"><span>1</span></div><div class="c n" style="left:657px;width:120px"><span>10.05.2025 11:58:19</span></div><div class="c" style="left:777px;width:202px"><span>Требуется подпись организации</span></div><div class="c n2" style="left:979px;width:74px"><span>434/2025</span></div><div class="c" style="left:1053px;width:198px"><span style="letter-spacing:-0.5px">Афанасьева Алёна</span></div><div class="c" style="left:1251px;width:231px"><span>Первичный осмотр лечащего врача</span></div><div class="c" style="left:1482px;width:118px"><span>Админов А.А.</span></div><div class="c" style="left:1600px;width:315px"><span></span></div></div>
<div class="row" style="top:466px;height:31px;--t:7px"><div class="c" style="left:0px;width:29px"><span class="cb" style="left:6px;top:9px"></span></div><div class="c n" style="left:29px;width:71px"><span>26513</span></div><div class="c" style="left:100px;width:250px"><span>Консультация гомеопата</span></div><div class="c lk" style="left:350px;width:207px"><a>[Тест] Прикрепленный<br><i>документ #26513.xml</i></a></div><div class="c n" style="left:557px;width:100px"><span>1</span></div><div class="c n" style="left:657px;width:120px"><span>10.05.2025 12:09:26</span></div><div class="c" style="left:777px;width:202px"><span>Требуется подпись организации</span></div><div class="c n2" style="left:979px;width:74px"><span>434/2025</span></div><div class="c" style="left:1053px;width:198px"><span style="letter-spacing:-0.5px">Афанасьева Алёна</span></div><div class="c" style="left:1251px;width:231px"><span>Консультация гомеопата</span></div><div class="c" style="left:1482px;width:118px"><span>Админов А.А.</span></div><div class="c" style="left:1600px;width:315px"><span></span></div></div>
<div class="row" style="top:497px;height:31px;--t:8px"><div class="c" style="left:0px;width:29px"><span class="cb" style="left:6px;top:9px"></span></div><div class="c n" style="left:29px;width:71px"><span>26514</span></div><div class="c" style="left:100px;width:250px"><span>Консультация гомеопата</span></div><div class="c lk" style="left:350px;width:207px"><a>[Тест] Прикрепленный<br><i>документ #26514.xml</i></a></div><div class="c n" style="left:557px;width:100px"><span>1</span></div><div class="c n" style="left:657px;width:120px"><span>10.05.2025 12:15:05</span></div><div class="c" style="left:777px;width:202px"><span>Требуется подпись организации</span></div><div class="c n2" style="left:979px;width:74px"><span>434/2025</span></div><div class="c" style="left:1053px;width:198px"><span style="letter-spacing:-0.5px">Афанасьева Алёна</span></div><div class="c" style="left:1251px;width:231px"><span>Консультация гомеопата</span></div><div class="c" style="left:1482px;width:118px"><span>Админов А.А.</span></div><div class="c" style="left:1600px;width:315px"><span></span></div></div>
<div class="row" style="top:528px;height:32px;--t:8px"><div class="c" style="left:0px;width:29px"><span class="cb" style="left:6px;top:10px"></span></div><div class="c n" style="left:29px;width:71px"><span>26564</span></div><div class="c" style="left:100px;width:250px"><span style="letter-spacing:-0.1px">Консультация диетолога</span></div><div class="c lk" style="left:350px;width:207px"><a>[Тест] Прикрепленный<br><i>документ #26564.xml</i></a></div><div class="c n" style="left:557px;width:100px"><span>1</span></div><div class="c n" style="left:657px;width:120px"><span>10.05.2025 13:49:21</span></div><div class="c" style="left:777px;width:202px"><span>Требуется подпись организации</span></div><div class="c n2" style="left:979px;width:74px"><span>531/2025</span></div><div class="c" style="left:1053px;width:198px"><span style="letter-spacing:-0.25px">Блохина Лариса</span></div><div class="c" style="left:1251px;width:231px"><span style="letter-spacing:-0.1px">Консультация диетолога</span></div><div class="c" style="left:1482px;width:118px"><span>Админов А.А.</span></div><div class="c" style="left:1600px;width:315px"><span></span></div></div>
<div class="row" style="top:560px;height:31px;--t:7px"><div class="c" style="left:0px;width:29px"><span class="cb" style="left:6px;top:9px"></span></div><div class="c n" style="left:29px;width:71px"><span>26565</span></div><div class="c" style="left:100px;width:250px"><span style="letter-spacing:-0.1px">Консультация диетолога</span></div><div class="c lk" style="left:350px;width:207px"><a>[Тест] Прикрепленный<br><i>документ #26565.xml</i></a></div><div class="c n" style="left:557px;width:100px"><span>1</span></div><div class="c n" style="left:657px;width:120px"><span>10.05.2025 13:51:30</span></div><div class="c" style="left:777px;width:202px"><span>Требуется подпись организации</span></div><div class="c n2" style="left:979px;width:74px"><span>531/2025</span></div><div class="c" style="left:1053px;width:198px"><span style="letter-spacing:-0.25px">Блохина Лариса</span></div><div class="c" style="left:1251px;width:231px"><span style="letter-spacing:-0.1px">Консультация диетолога</span></div><div class="c" style="left:1482px;width:118px"><span>Админов А.А.</span></div><div class="c" style="left:1600px;width:315px"><span></span></div></div>
<div class="row" style="top:591px;height:31px;--t:7px"><div class="c" style="left:0px;width:29px"><span class="cb" style="left:6px;top:9px"></span></div><div class="c n" style="left:29px;width:71px"><span>26566</span></div><div class="c" style="left:100px;width:250px"><span style="letter-spacing:-0.1px">Консультация диетолога</span></div><div class="c lk" style="left:350px;width:207px"><a>[Тест] Прикрепленный<br><i>документ #26566.xml</i></a></div><div class="c n" style="left:557px;width:100px"><span>1</span></div><div class="c n" style="left:657px;width:120px"><span>10.05.2025 13:54:09</span></div><div class="c" style="left:777px;width:202px"><span>Требуется подпись организации</span></div><div class="c n2" style="left:979px;width:74px"><span>532/2025</span></div><div class="c" style="left:1053px;width:198px"><span>Кузьмина Мария</span></div><div class="c" style="left:1251px;width:231px"><span style="letter-spacing:-0.1px">Консультация диетолога</span></div><div class="c" style="left:1482px;width:118px"><span>Админов А.А.</span></div><div class="c" style="left:1600px;width:315px"><span></span></div></div>
<div class="row" style="top:622px;height:31px;--t:7px"><div class="c" style="left:0px;width:29px"><span class="cb" style="left:6px;top:9px"></span></div><div class="c n" style="left:29px;width:71px"><span>26516</span></div><div class="c" style="left:100px;width:250px"><span>Первичный осмотр лечащего врача</span></div><div class="c lk" style="left:350px;width:207px"><a>[Тест] Прикрепленный<br><i>документ #26516.xml</i></a></div><div class="c n" style="left:557px;width:100px"><span>1</span></div><div class="c n" style="left:657px;width:120px"><span>10.05.2025 14:17:21</span></div><div class="c" style="left:777px;width:202px"><span>Требуется подпись организации</span></div><div class="c n2" style="left:979px;width:74px"><span>525/2025</span></div><div class="c" style="left:1053px;width:198px"><span style="letter-spacing:-0.1px">Стрелкова Ангелина Ивановна</span></div><div class="c" style="left:1251px;width:231px"><span>Первичный осмотр лечащего врача</span></div><div class="c" style="left:1482px;width:118px"><span>Админов А.А.</span></div><div class="c" style="left:1600px;width:315px"><span></span></div></div>
<div class="row" style="top:653px;height:31px;--t:8px"><div class="c" style="left:0px;width:29px"><span class="cb" style="left:6px;top:9px"></span></div><div class="c n" style="left:29px;width:71px"><span>26574</span></div><div class="c" style="left:100px;width:250px"><span>Консультация кардиолога первичная</span></div><div class="c lk" style="left:350px;width:207px"><a>[Тест] Прикрепленный<br><i>документ #26574.xml</i></a></div><div class="c n" style="left:557px;width:100px"><span>2</span></div><div class="c n" style="left:657px;width:120px"><span>14.05.2025 12:31:37</span></div><div class="c" style="left:777px;width:202px"><span>Требуется подпись организации</span></div><div class="c n2" style="left:979px;width:74px"><span>449/2025</span></div><div class="c" style="left:1053px;width:198px"><span style="letter-spacing:0.18px">Миронова Ирина</span></div><div class="c" style="left:1251px;width:231px"><span>Консультация кардиолога первичная</span></div><div class="c" style="left:1482px;width:118px"><span style="letter-spacing:-0.1px">Григорьева А.В.</span></div><div class="c" style="left:1600px;width:315px"><span></span></div></div>
<div class="row" style="top:684px;height:32px;--t:8px"><div class="c" style="left:0px;width:29px"><span class="cb" style="left:6px;top:10px"></span></div><div class="c n" style="left:29px;width:71px"><span>26575</span></div><div class="c" style="left:100px;width:250px"><span>Консультация кардиолога первичная</span></div><div class="c lk" style="left:350px;width:207px"><a>[Тест] Прикрепленный<br><i>документ #26575.xml</i></a></div><div class="c n" style="left:557px;width:100px"><span>1</span></div><div class="c n" style="left:657px;width:120px"><span>14.05.2025 15:11:19</span></div><div class="c" style="left:777px;width:202px"><span>Требуется подпись организации</span></div><div class="c n2" style="left:979px;width:74px"><span>536/2025</span></div><div class="c" style="left:1053px;width:198px"><span>Кравцов Валентин Григорьевич</span></div><div class="c" style="left:1251px;width:231px"><span>Консультация кардиолога первичная</span></div><div class="c" style="left:1482px;width:118px"><span style="letter-spacing:-0.1px">Григорьева А.В.</span></div><div class="c" style="left:1600px;width:315px"><span></span></div></div>
<div class="row" style="top:716px;height:31px;--t:7px"><div class="c" style="left:0px;width:29px"><span class="cb" style="left:6px;top:9px"></span></div><div class="c n" style="left:29px;width:71px"><span>26576</span></div><div class="c" style="left:100px;width:250px"><span>Консультация кардиолога первичная</span></div><div class="c lk" style="left:350px;width:207px"><a>[Тест] Прикрепленный<br><i>документ #26576.xml</i></a></div><div class="c n" style="left:557px;width:100px"><span>1</span></div><div class="c n" style="left:657px;width:120px"><span>14.05.2025 15:57:42</span></div><div class="c" style="left:777px;width:202px"><span>Требуется подпись организации</span></div><div class="c n2" style="left:979px;width:74px"><span>538/2025</span></div><div class="c" style="left:1053px;width:198px"><span>Кравцов Валентин Григорьевич</span></div><div class="c" style="left:1251px;width:231px"><span>Консультация кардиолога первичная</span></div><div class="c" style="left:1482px;width:118px"><span style="letter-spacing:-0.1px">Григорьева А.В.</span></div><div class="c" style="left:1600px;width:315px"><span></span></div></div>
<div class="row" style="top:747px;height:31px;--t:7px"><div class="c" style="left:0px;width:29px"><span class="cb" style="left:6px;top:9px"></span></div><div class="c n" style="left:29px;width:71px"><span>26573</span></div><div class="c" style="left:100px;width:250px"><span>Расшифровка Флюорограммы</span></div><div class="c lk" style="left:350px;width:207px"><a>[Тест] Прикрепленный<br><i>документ #26573.xml</i></a></div><div class="c n" style="left:557px;width:100px"><span>1</span></div><div class="c n" style="left:657px;width:120px"><span>14.05.2025 18:09:58</span></div><div class="c" style="left:777px;width:202px"><span>Требуется подпись организации</span></div><div class="c n2" style="left:979px;width:74px"><span>534/2025</span></div><div class="c" style="left:1053px;width:198px"><span style="letter-spacing:-0.2px">Сысоев Герман</span></div><div class="c" style="left:1251px;width:231px"><span>Расшифровка Флюорограммы</span></div><div class="c" style="left:1482px;width:118px"><span>Админов А.А.</span></div><div class="c" style="left:1600px;width:315px"><span></span></div></div>
</div>
</body></html>
